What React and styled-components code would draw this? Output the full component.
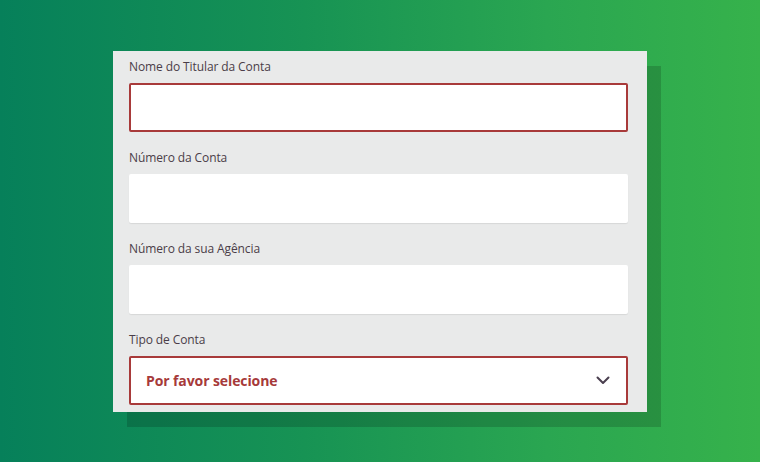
import React from "react";
import styled, { createGlobalStyle } from "styled-components";

const GlobalStyle = createGlobalStyle`
  html, body {
    margin: 0;
    padding: 0;
  }
  body {
    font-family: "Open Sans", "Noto Sans", sans-serif;
  }
`;

const Page = styled.div`
  width: 760px;
  height: 462px;
  overflow: hidden;
  background: linear-gradient(90deg, #06805a 0%, #179354 40%, #2aa651 72%, #36b24b 100%);
  padding: 51px 0 0 113px;
  box-sizing: border-box;
`;

const Card = styled.form`
  width: 534px;
  box-sizing: border-box;
  background: #e9eaea;
  padding: 7px 19px 7px 16px;
  box-shadow: 14px 15px 0 rgba(0, 0, 0, 0.16);
  display: flex;
  flex-direction: column;
  gap: 17px;
`;

const Field = styled.div`
  display: flex;
  flex-direction: column;
`;

const Label = styled.label`
  font-size: 12px;
  line-height: 18px;
  color: #4a3d48;
  margin-bottom: 7px;
  letter-spacing: -0.1px;
`;

const Input = styled.input`
  height: 49px;
  box-sizing: border-box;
  width: 100%;
  margin: 0;
  background: #ffffff;
  border: ${props => (props.invalid ? "2px solid #a83a3a" : "none")};
  border-radius: 2px;
  box-shadow: ${props =>
    props.invalid ? "none" : "0 1px 1px rgba(0, 0, 0, 0.08)"};
  outline: none;
  font: inherit;
  padding: 0 15px;
`;

const Select = styled.div`
  height: 49px;
  box-sizing: border-box;
  background: #ffffff;
  border: 2px solid #a83a3a;
  border-radius: 2px;
  display: flex;
  align-items: center;
  justify-content: space-between;
  padding: 0 16px 0 15px;
`;

const Placeholder = styled.span`
  font-size: 14px;
  font-weight: 700;
  color: #a63a3a;
  letter-spacing: -0.1px;
`;

const Chevron = () => (
  <svg width="14" height="9" viewBox="0 0 14 9" fill="none">
    <path
      d="M1.5 1.5 L7 7 L12.5 1.5"
      stroke="#4a3f4f"
      strokeWidth="2"
      strokeLinecap="round"
      strokeLinejoin="round"
    />
  </svg>
);

export default function App() {
  return (
    <>
      <GlobalStyle />
      <Page>
        <Card onSubmit={e => e.preventDefault()}>
          <Field>
            <Label>Nome do Titular da Conta</Label>
            <Input invalid />
          </Field>
          <Field>
            <Label>Número da Conta</Label>
            <Input />
          </Field>
          <Field>
            <Label>Número da sua Agência</Label>
            <Input />
          </Field>
          <Field>
            <Label>Tipo de Conta</Label>
            <Select>
              <Placeholder>Por favor selecione</Placeholder>
              <Chevron />
            </Select>
          </Field>
        </Card>
      </Page>
    </>
  );
}
